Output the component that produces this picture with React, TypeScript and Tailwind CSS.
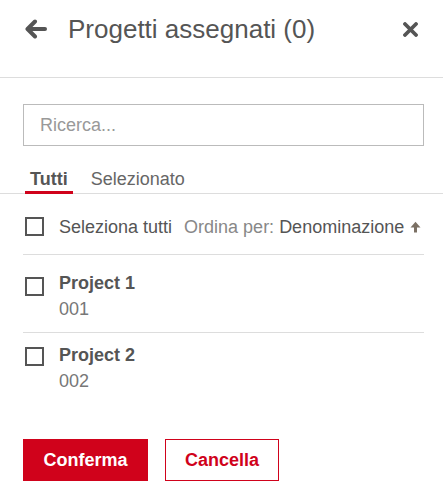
import React from "react";

function Checkbox({ className = "" }: { className?: string }) {
  return <div className={"w-[19px] h-[19px] border-2 border-[#555] bg-white shrink-0 " + className} />;
}

export default function App() {
  return (
    <div className="w-[443px] h-[501px] bg-white text-[#555] font-['Liberation_Sans',Arial,sans-serif]">
      <div className="h-[78px] border-b border-[#ddd]">
        <div className="h-[58px] flex items-center pl-[25px] pr-[25px]">
          <svg width="22" height="20" viewBox="0 0 22 20" className="shrink-0">
            <path d="M10 2.5 L2.5 10 L10 17.5" fill="none" stroke="#555" strokeWidth="4" strokeLinecap="round" strokeLinejoin="round" />
            <path d="M3.5 10 H20" stroke="#555" strokeWidth="4" strokeLinecap="round" />
          </svg>
          <div className="ml-[21px] text-[26px] leading-[26px] text-[#555] whitespace-nowrap">Progetti assegnati (0)</div>
          <div className="ml-auto">
            <svg width="15" height="15" viewBox="0 0 15 15" className="block">
              <path d="M2 2 L13 13 M13 2 L2 13" stroke="#555" strokeWidth="3.8" strokeLinecap="round" />
            </svg>
          </div>
        </div>
      </div>
      <div className="pl-[23px] pr-[19px] pt-[26px]">
        <div className="h-[42px] border border-[#bbb] flex items-center px-[16px] text-[18px] text-[#999]">Ricerca...</div>
      </div>
      <div className="mt-[23px] border-b border-[#ddd] flex pl-[25px] text-[18px] leading-[20px] whitespace-nowrap">
        <div className="px-[5px] pb-[2px] border-b-[3px] border-[#d0021b] mb-[-1px] font-bold text-[#555]">Tutti</div>
        <div className="ml-[18px] text-[#666]">Selezionato</div>
      </div>
      <div className="pl-[23px] pr-[19px]">
        <div className="flex items-start h-[61px] pt-[23px] border-b border-[#ddd] pl-[2px] text-[18px] leading-[20px] whitespace-nowrap">
          <Checkbox />
          <span className="ml-[15px] text-[#555]">Seleziona tutti</span>
          <span className="ml-[12px] text-[#888]">Ordina per:</span>
          <span className="ml-[5px] text-[#555]">Denominazione</span>
          <svg width="11" height="12" viewBox="0 0 11 12" className="ml-[6px] mt-[4px] shrink-0">
            <path d="M5.5 11.5 V3.5" stroke="#7b7064" strokeWidth="3" />
            <path d="M0.5 6.5 L5.5 0.8 L10.5 6.5 Z" fill="#7b7064" />
          </svg>
        </div>
        <div className="flex items-start pt-[18px] pb-[13px] border-b border-[#ddd] pl-[2px] text-[18px] leading-[20px]">
          <Checkbox className="mt-[4px]" />
          <div className="ml-[15px]">
            <div className="font-bold text-[#555]">Project 1</div>
            <div className="text-[#777] mt-[6px]">001</div>
          </div>
        </div>
        <div className="flex items-start pt-[12px] pl-[2px] text-[18px] leading-[20px]">
          <Checkbox className="mt-[2px]" />
          <div className="ml-[15px]">
            <div className="font-bold text-[#555]">Project 2</div>
            <div className="text-[#777] mt-[6px]">002</div>
          </div>
        </div>
        <div className="flex gap-[17px] mt-[48px]">
          <button className="h-[42px] w-[125px] bg-[#d0021b] text-white font-bold text-[18px]">Conferma</button>
          <button className="h-[42px] w-[114px] border border-[#d0021b] text-[#d0021b] font-bold text-[18px] bg-white">Cancella</button>
        </div>
      </div>
    </div>
  );
}
